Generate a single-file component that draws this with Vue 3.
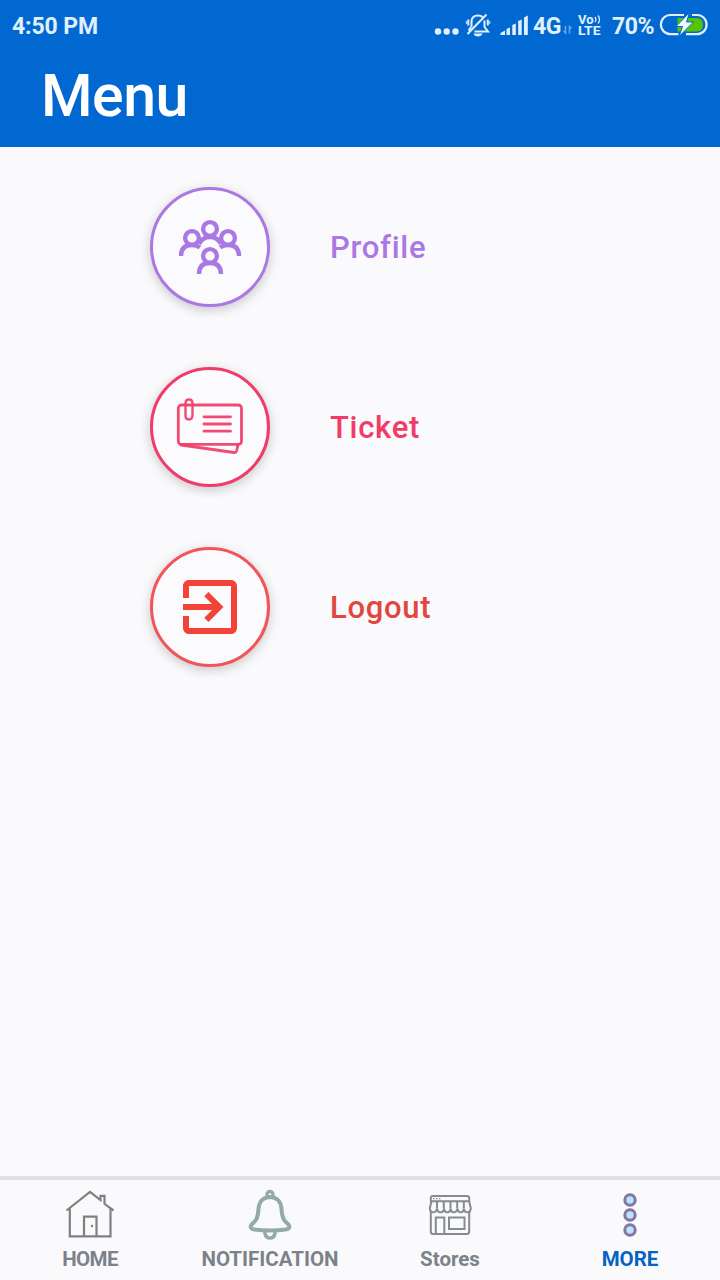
<script setup>
import { ref } from 'vue'

const active = ref('more')

const items = [
    { id: 'profile', label: 'Profile' },
    { id: 'ticket', label: 'Ticket' },
    { id: 'logout', label: 'Logout' }
]

const tabs = [
    { id: 'home', label: 'HOME' },
    { id: 'notification', label: 'NOTIFICATION' },
    { id: 'stores', label: 'Stores' },
    { id: 'more', label: 'MORE' }
]
</script>

<template>
    <div class="screen">
        <header class="header">
            <div class="status">
                <span class="time">4:50 PM</span>
                <svg class="signals" width="100" height="50" viewBox="430 0 100 50">
                    <g fill="#e0f0ff">
                        <circle cx="438" cy="31.5" r="3.2" />
                        <circle cx="446.700" cy="31.5" r="3.2" />
                        <circle cx="455.500" cy="31.5" r="3.2" />
                        <path d="M500.500 35v-2l4.500-2.500v4.500zM506.500 35v-6l3.500-1.500v7.500zM512.300 35v-10l3.500-1.500v11.500zM518.200 35v-14l3.500-1.500v15.500zM524 35v-17.500l3.800-2v19.500z" />
                        <path d="M473.500 33.500h9q-1 3-4.500 3t-4.500-3z" />
                    </g>
                    <g fill="none" stroke="#e0f0ff" stroke-width="2">
                        <path d="M471.500 27V22q0-6.500 6.500-6.500 3 0 4.500 1.500M484.500 20.500v6.500l3.500 4.500H474.500M467.500 34L486.500 14.500M471 27l-2.500 3.500" />
                        <path d="M468.300 19.500v6M487.800 19.500v6" />
                        <path d="M466.300 21v3M489.800 21v3" stroke-width="1" />
                    </g>
                </svg>
                <span class="network">4G</span>
                <svg class="lte" width="44" height="50" viewBox="560 0 44 50">
                    <g fill="none" stroke="#62abe8" stroke-width="1.500">
                        <path d="M565.500 26v7l-2-2M569.500 33.500v-7l2 2" />
                    </g>
                    <g fill="none" stroke="#e0f0ff" stroke-width="1.300">
                        <path d="M595 17q1.800 2.500 0 5M598 15.500q3 4 0 8" />
                    </g>
                    <text class="lte-text" x="578" y="23.500" textLength="15.500" lengthAdjust="spacingAndGlyphs">Vo</text>
                    <text class="lte-text" x="578" y="35.300" textLength="22.500" lengthAdjust="spacingAndGlyphs">LTE</text>
                </svg>
                <span class="percent">70%</span>
                <svg class="battery" width="50" height="50" viewBox="658 0 50 50">
                    <path d="M677.500 18h19q6.500 0 6.500 6.700t-6.500 6.800h-19z" fill="#55c500" />
                    <g fill="none" stroke="#e0f0ff" stroke-width="2.200">
                        <path d="M684 15h-13.500a9.500 9.500 0 0 0 0 19.200h8M686 34.200h11a9.500 9.500 0 0 0 0-19.200h-5" />
                    </g>
                    <path d="M689.500 12.500l-13.500 14h6.500l-3.500 10 14.500-14.500h-7z" fill="#f2f9ff" stroke="#0068d0" stroke-width="1" />
                </svg>
            </div>
            <h1>Menu</h1>
        </header>

        <main class="menu">
            <div v-for="item in items" :key="item.id" class="item" :class="item.id">
                <span class="circle">
                    <svg v-if="item.id === 'profile'" width="114" height="114" viewBox="3 3 114 114" fill="none" stroke="currentColor" stroke-width="4.400">
                        <circle cx="60" cy="42" r="6.900" />
                        <circle cx="42" cy="51" r="6.900" />
                        <circle cx="78" cy="51" r="6.900" />
                        <circle cx="60" cy="69" r="6.900" />
                        <path d="M49 57q3.500-7 11-7t11 7" />
                        <path d="M31 69q0-11 11-11 4.500 0 8 2.500M89 69q0-11-11-11-4.500 0-8 2.500M49 87q0-11 11-11t11 11" />
                    </svg>
                    <svg v-else-if="item.id === 'ticket'" width="114" height="114" viewBox="3 3 114 114" fill="none" stroke="currentColor" stroke-opacity="0.92" stroke-width="2.800" stroke-linecap="round" stroke-linejoin="round">
                        <rect x="28.300" y="38" width="63.200" height="39.300" rx="3" />
                        <path d="M31 78l53 7.500q2 .3 2.500-1.500l1.500-6M54 49.800h26.500M54 57h26.500M54 64.200h26.500" />
                        <path d="M35.500 44.500V36.500q0-4 3.500-4t3.500 4V48q0 4.500-3.500 4.500t-3.500-4V44" stroke-width="2.400" />
                    </svg>
                    <svg v-else width="114" height="114" viewBox="3 3 114 114">
                        <path transform="translate(24 24) scale(3)" fill="currentColor" d="M10.090 15.590L11.500 17l5-5-5-5-1.410 1.410L12.670 11H3v2h9.670l-2.580 2.590zM19 3H5c-1.110 0-2 .9-2 2v4h2V5h14v14H5v-4H3v4c0 1.100.89 2 2 2h14c1.100 0 2-.9 2-2V5c0-1.100-.9-2-2-2z" />
                    </svg>
                </span>
                <span class="label">{{ item.label }}</span>
            </div>
        </main>

        <nav class="tabs">
            <a v-for="tab in tabs" :key="tab.id" class="tab" :class="[tab.id, { active: active === tab.id }]" @click="active = tab.id">
                <svg v-if="tab.id === 'home'" width="60" height="60" viewBox="60 1184 60 60" fill="none" stroke="#7f8181" stroke-width="2.200">
                    <path d="M66.500 1210.500L90 1191.800l10.500 8.300v-4.300h4v8l9 6.700" />
                    <path d="M69.800 1208.500v27.800h40.700v-27.800M84 1236v-19.300h12.500V1236" />
                    <circle cx="92" cy="1226" r="1.200" fill="#7f8181" stroke="none" />
                </svg>
                <svg v-else-if="tab.id === 'notification'" width="60" height="60" viewBox="240 1184 60 60" fill="none" stroke="#94aaa5" stroke-width="4">
                    <path d="M270 1197c-7 0-11 5-11.500 12-.5 9-2.500 12-7 15.500-2 3 0 4.500 3 5 9 1.200 22 1.200 31 0 3-.5 5-2 3-5-4.500-3.500-6.500-6.500-7-15.500-.5-7-4.500-12-11.500-12z" />
                    <circle cx="270" cy="1194.500" r="3" stroke-width="3.400" />
                    <path d="M265 1231.500v2q1 4.500 5 4.500t5-4.500v-2" stroke-width="3.500" />
                </svg>
                <svg v-else-if="tab.id === 'stores'" width="60" height="60" viewBox="420 1184 60 60" fill="none" stroke="#858b91" stroke-width="2">
                    <path d="M430.800 1211v20.500q0 2.500 2.500 2.500h33.400q2.500 0 2.500-2.500V1211M430.800 1202v-4q0-2 2.500-2h33.400q2.500 0 2.500 2v4" />
                    <path d="M431 1201.300h38M431.500 1201.300l-1.700 7q.5 4 3.500 4t3.700-4q.5 4 3.500 4t3.500-4q.5 4 3.300 4t3.300-4q.5 4 3.300 4t3.500-4q.5 4 3.400 4t3-4q.5 4 3.500 4t3.500-4l-1.700-7M437 1208v-6.500M443.800 1208v-6.500M450.500 1208v-6.500M457.200 1208v-6.500M463.800 1208v-6.500" />
                    <path d="M435.800 1234v-16.500h8.500V1234M449 1217.500h15.500v11.500H449z" />
                    <path d="M433 1198.700h7.500" stroke-dasharray="1.500 1.500" stroke-width="1.300" />
                </svg>
                <svg v-else width="60" height="60" viewBox="600 1184 60 60" fill="#b8e5fc" stroke="#8376a0" stroke-width="3">
                    <circle cx="630" cy="1200" r="5.200" />
                    <circle cx="630" cy="1215" r="5.200" />
                    <circle cx="630" cy="1230" r="5.200" />
                </svg>
                <span class="tab-label">{{ tab.label }}</span>
            </a>
        </nav>
    </div>
</template>

<style>
body {
    margin: 0;
}
</style>

<style scoped>
.screen {
    display: flex;
    flex-direction: column;
    width: 720px;
    height: 1280px;
    overflow: hidden;
    background-color: #fafafc;
    font-family: Roboto, "Liberation Sans", sans-serif;
}

.header {
    height: 147px;
    background-color: #0068d0;
    color: #fff;
}

.status {
    display: flex;
    height: 50px;
    padding: 0 12px;
    color: #e0f0ff;
    font-size: 23px;
    font-weight: bold;
    line-height: 53px;
    white-space: nowrap;
}

.time {
    width: 418px;
    letter-spacing: -0.1px;
}

.network {
    width: 27px;
    margin-left: 3px;
    letter-spacing: -0.4px;
}

.lte-text {
    fill: #e0f0ff;
    font-size: 12px;
    font-weight: bold;
}

.percent {
    width: 46px;
    margin-left: 8px;
    letter-spacing: -0.5px;
}

.signals,
.lte,
.battery {
    flex: none;
}

h1 {
    margin: 0 0 0 41px;
    font-size: 59px;
    font-weight: 500;
    line-height: 91px;
    letter-spacing: -0.5px;
}

.menu {
    display: flex;
    flex: 1;
    flex-direction: column;
    gap: 40px;
    padding: 30px 140px;
}

.item {
    display: flex;
    align-items: center;
    height: 140px;
    overflow: hidden;
}

.circle {
    box-sizing: border-box;
    width: 120px;
    height: 120px;
    margin: 0 60px 0 10px;
    border: 3px solid currentColor;
    border-radius: 50%;
    box-shadow: 0 3px 12px rgba(0, 0, 0, 0.2);
    background-color: #fbfbfd;
}

.circle svg {
    display: block;
}

.profile {
    color: #ab78e3;
}

.ticket {
    color: #f03c69;
}

.logout {
    color: #f44336;
}

.logout .circle {
    border-color: #f25558;
}

.label {
    font-size: 31px;
    font-weight: 500;
    letter-spacing: 0.7px;
}

.logout .label {
    color: #e2463f;
}

.tabs {
    display: flex;
    box-sizing: border-box;
    height: 104px;
    border-top: 4px solid #e0e0e8;
    background-color: #fafafc;
}

.tab {
    display: flex;
    flex: 1;
    flex-direction: column;
    align-items: center;
    padding-top: 4px;
    color: #7b8289;
}

.tab-label {
    font-size: 20.5px;
    font-weight: bold;
    line-height: 31px;
}

.home .tab-label {
    letter-spacing: -0.6px;
}

.active {
    color: #0563c1;
}
</style>
